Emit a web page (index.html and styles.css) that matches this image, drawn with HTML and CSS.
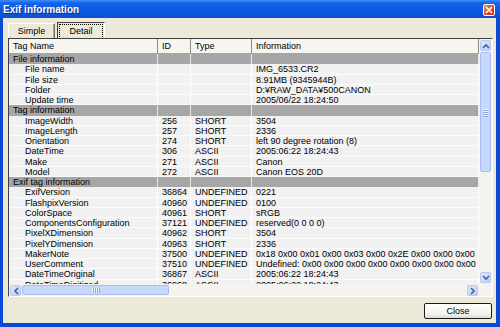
FILE: index.html
```html
<!DOCTYPE html>
<html lang="en">
<head>
    <meta charset="UTF-8">
    <title>Exif information</title>
    <link rel="stylesheet" href="styles.css">
</head>
<body>
    <div class="window">
        <div class="titlebar">
            <span class="title">Exif information</span>
            <span class="close-x">
                <svg width="8" height="8" viewBox="0 0 8 8"><path d="M1 1 L7 7 M7 1 L1 7" stroke="#fff" stroke-width="1.6"/></svg>
            </span>
        </div>
        <div class="frame">
            <div class="dialog">
                <div class="tabs">
                    <div class="tab">Simple</div>
                    <div class="tab active"><span>Detail</span></div>
                </div>
                <div class="listview">
                    <div class="content">
                        <div class="header">
                            <div class="hcell">Tag Name</div>
                            <div class="hcell">ID</div>
                            <div class="hcell">Type</div>
                            <div class="hcell">Information</div>
                        </div>
                        <div class="rows">
                            <div class="row group"><div class="cell">File information</div><div class="cell"></div><div class="cell"></div><div class="cell"></div></div>
                            <div class="row"><div class="cell name">File name</div><div class="cell"></div><div class="cell"></div><div class="cell">IMG_6533.CR2</div></div>
                            <div class="row"><div class="cell name">File size</div><div class="cell"></div><div class="cell"></div><div class="cell">8.91MB (9345944B)</div></div>
                            <div class="row"><div class="cell name">Folder</div><div class="cell"></div><div class="cell"></div><div class="cell">D:¥RAW_DATA¥500CANON</div></div>
                            <div class="row"><div class="cell name">Update time</div><div class="cell"></div><div class="cell"></div><div class="cell">2005/06/22 18:24:50</div></div>
                            <div class="row group"><div class="cell">Tag information</div><div class="cell"></div><div class="cell"></div><div class="cell"></div></div>
                            <div class="row"><div class="cell name">ImageWidth</div><div class="cell">256</div><div class="cell">SHORT</div><div class="cell">3504</div></div>
                            <div class="row"><div class="cell name">ImageLength</div><div class="cell">257</div><div class="cell">SHORT</div><div class="cell">2336</div></div>
                            <div class="row"><div class="cell name">Orientation</div><div class="cell">274</div><div class="cell">SHORT</div><div class="cell">left 90 degree rotation (8)</div></div>
                            <div class="row"><div class="cell name">DateTime</div><div class="cell">306</div><div class="cell">ASCII</div><div class="cell">2005:06:22 18:24:43</div></div>
                            <div class="row"><div class="cell name">Make</div><div class="cell">271</div><div class="cell">ASCII</div><div class="cell">Canon</div></div>
                            <div class="row"><div class="cell name">Model</div><div class="cell">272</div><div class="cell">ASCII</div><div class="cell">Canon EOS 20D</div></div>
                            <div class="row group"><div class="cell">Exif tag information</div><div class="cell"></div><div class="cell"></div><div class="cell"></div></div>
                            <div class="row"><div class="cell name">ExifVersion</div><div class="cell">36864</div><div class="cell">UNDEFINED</div><div class="cell">0221</div></div>
                            <div class="row"><div class="cell name">FlashpixVersion</div><div class="cell">40960</div><div class="cell">UNDEFINED</div><div class="cell">0100</div></div>
                            <div class="row"><div class="cell name">ColorSpace</div><div class="cell">40961</div><div class="cell">SHORT</div><div class="cell">sRGB</div></div>
                            <div class="row"><div class="cell name">ComponentsConfiguration</div><div class="cell">37121</div><div class="cell">UNDEFINED</div><div class="cell">reserved(0 0 0 0)</div></div>
                            <div class="row"><div class="cell name">PixelXDimension</div><div class="cell">40962</div><div class="cell">SHORT</div><div class="cell">3504</div></div>
                            <div class="row"><div class="cell name">PixelYDimension</div><div class="cell">40963</div><div class="cell">SHORT</div><div class="cell">2336</div></div>
                            <div class="row"><div class="cell name">MakerNote</div><div class="cell">37500</div><div class="cell">UNDEFINED</div><div class="cell">0x18 0x00 0x01 0x00 0x03 0x00 0x2E 0x00 0x00 0x00</div></div>
                            <div class="row"><div class="cell name">UserComment</div><div class="cell">37510</div><div class="cell">UNDEFINED</div><div class="cell">Undefined: 0x00 0x00 0x00 0x00 0x00 0x00 0x00 0x00</div></div>
                            <div class="row"><div class="cell name">DateTimeOriginal</div><div class="cell">36867</div><div class="cell">ASCII</div><div class="cell">2005:06:22 18:24:43</div></div>
                            <div class="row"><div class="cell name">DateTimeDigitized</div><div class="cell">36868</div><div class="cell">ASCII</div><div class="cell">2005:06:22 18:24:43</div></div>
                        </div>
                    </div>
                    <div class="vscroll">
                        <div class="sb-btn"><svg width="8" height="6" viewBox="0 0 8 6"><path d="M1 5 L4 2 L7 5" fill="none" stroke="#4d6185" stroke-width="1.6"/></svg></div>
                        <div class="thumb v"><i></i><i></i><i></i><i></i></div>
                        <div class="track"></div>
                        <div class="sb-btn"><svg width="8" height="6" viewBox="0 0 8 6"><path d="M1 1 L4 4 L7 1" fill="none" stroke="#4d6185" stroke-width="1.6"/></svg></div>
                    </div>
                    <div class="hscroll">
                        <div class="sb-btn"><svg width="6" height="8" viewBox="0 0 6 8"><path d="M5 1 L2 4 L5 7" fill="none" stroke="#4d6185" stroke-width="1.6"/></svg></div>
                        <div class="thumb h"><i></i><i></i><i></i><i></i></div>
                        <div class="track"></div>
                        <div class="sb-btn"><svg width="6" height="8" viewBox="0 0 6 8"><path d="M1 1 L4 4 L1 7" fill="none" stroke="#4d6185" stroke-width="1.6"/></svg></div>
                    </div>
                    <div class="corner"></div>
                </div>
                <div class="footer">
                    <button class="close-btn">Close</button>
                </div>
            </div>
        </div>
    </div>
</body>
</html>
```

FILE: styles.css
```css
body {
    margin: 0;
    width: 500px;
    height: 327px;
    overflow: hidden;
    font-family: "Liberation Sans", Arial, sans-serif;
    font-size: 9px;
    color: #000;
}

.window {
    height: 327px;
    display: flex;
    flex-direction: column;
    background: #0b4ad6;
}

.titlebar {
    height: 18px;
    flex: none;
    display: flex;
    align-items: center;
    justify-content: space-between;
    padding: 0 5px 0 3px;
    background: linear-gradient(#3d8ffb 0, #1463ea 3px, #0c5ae2 55%, #0a50d6 100%);
    color: #fff;
}

.title {
    font-size: 10px;
    font-weight: bold;
    text-shadow: 1px 1px #0a2a8c;
}

.close-x {
    width: 10px;
    height: 10px;
    margin-top: 1px;
    border: 1px solid #fff;
    border-radius: 2px;
    background: linear-gradient(135deg, #f08a6c, #d8431f 60%, #c23616);
    display: flex;
    align-items: center;
    justify-content: center;
}

.frame {
    flex: 1;
    padding: 0 4px 4px 3px;
    display: flex;
}

.dialog {
    flex: 1;
    background: #ece9d8;
    padding: 4px 3px 0 5px;
    display: flex;
    flex-direction: column;
}

.tabs {
    display: flex;
    gap: 2px;
    height: 16px;
    align-items: flex-end;
}

.tab {
    box-sizing: border-box;
    width: 47px;
    height: 15px;
    line-height: 14px;
    text-align: center;
    border-top: 1px solid #fff;
    border-left: 1px solid #fff;
    border-right: 1px solid #716f64;
    box-shadow: inset -1px 0 #aca899;
}

.tab.active {
    width: 48px;
    height: 16px;
    padding: 1px;
    border: 1px solid #404040;
    border-right-color: #fff;
    border-bottom: none;
    box-shadow: none;
}

.tab.active span {
    display: block;
    height: 13px;
    line-height: 12px;
    border: 1px dotted #000;
}

.listview {
    height: 259px;
    box-sizing: border-box;
    border: 1px solid #fff;
    border-top-color: #404040;
    border-left-color: #404040;
    display: grid;
    grid-template-columns: 470px 13px;
    grid-template-rows: 245px 12px;
    background: #fff;
}

.content {
    overflow: hidden;
    background: #f1f1f1;
}

.header {
    display: grid;
    grid-template-columns: 149px 33px 61px 227px;
    height: 15px;
    box-sizing: border-box;
    background: #f6f5ef;
    border-bottom: 1px solid #a8a69a;
}

.hcell {
    padding-left: 4px;
    line-height: 14px;
    border-right: 1px solid #8e8c80;
}

.row {
    display: grid;
    grid-template-columns: 149px 33px 61px 227px;
    height: 10.25px;
    line-height: 10px;
    box-shadow: inset 0 -1px #fbfbfb;
}

.cell {
    padding-left: 4px;
    white-space: nowrap;
    overflow: hidden;
    border-right: 1px solid #fff;
}

.cell.name {
    padding-left: 16px;
}

.row.group {
    background: #a6a6a6;
    box-shadow: none;
}

.row.group .cell {
    border-right-color: #e8e8e8;
}

.vscroll,
.hscroll {
    display: flex;
    background: #f4f3ee;
    padding: 1px;
    gap: 1px;
}

.vscroll {
    flex-direction: column;
}

.sb-btn {
    flex: none;
    width: 11px;
    height: 11px;
    box-sizing: border-box;
    border: 1px solid #b7c8f5;
    border-radius: 2px;
    background: linear-gradient(135deg, #dde7fe, #bccdf9);
    display: flex;
    align-items: center;
    justify-content: center;
}

.track {
    flex: 1;
}

.thumb {
    flex: none;
    box-sizing: border-box;
    border: 1px solid #a9bdf0;
    border-radius: 2px;
    background: #c8d7fc;
    display: flex;
    align-items: center;
    justify-content: center;
    gap: 1px;
}

.thumb.v {
    width: 11px;
    height: 120px;
    flex-direction: column;
}

.thumb.v i {
    width: 5px;
    height: 1px;
    background: #eef3ff;
    box-shadow: 0 1px #8ca6e6;
}

.thumb.h {
    width: 147px;
    height: 10px;
}

.thumb.h i {
    width: 1px;
    height: 5px;
    background: #eef3ff;
    box-shadow: 1px 0 #8ca6e6;
}

.corner {
    background: #f4f3ee;
}

.footer {
    display: flex;
    justify-content: flex-end;
    padding: 6px 1px 0 0;
}

.close-btn {
    width: 68px;
    height: 16px;
    padding: 0;
    font-family: "Liberation Sans", Arial, sans-serif;
    font-size: 9px;
    color: #000;
    border: 1px solid #1c1c1c;
    border-radius: 2px;
    background: linear-gradient(#ffffff, #f4f3ee 70%, #dedbcf);
}
```
